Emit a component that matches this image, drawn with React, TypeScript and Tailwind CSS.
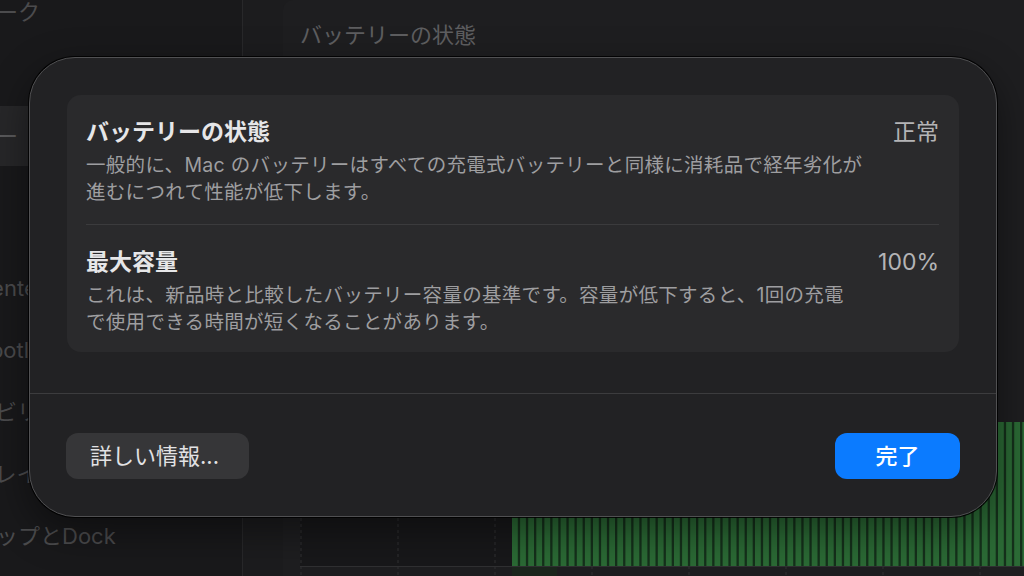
const sidebarItems = [
  { label: "ネットワーク" },
  { label: "VPN" },
  { label: "バッテリー", active: true },
  { label: "一般", groupStart: true },
  { label: "Game Center" },
  { label: "Siri と Spotlight" },
  { label: "アクセシビリティ" },
  { label: "ディスプレイ" },
  { label: "デスクトップとDock" },
];

function UsageChart() {
  const bars = Array.from({ length: 64 }, (_, i) => 212 + i * 8.1);
  const grid = [1, 98, 195, 292, 389, 486, 583, 680];
  return (
    <svg width="724" height="154" viewBox="0 0 724 154" className="block">
      <rect x="0" y="0" width="724" height="144" fill="#18181a" />
      {grid.map((x) => (
        <line key={x} x1={x} y1="0" x2={x} y2="154" stroke="#313133" strokeDasharray="3 3" />
      ))}
      <rect x="212" y="0" width="512" height="144" fill="#15301b" />
      {bars.map((x) => (
        <rect key={x} x={x} y="0" width="5.8" height="144" fill="#2b6a35" />
      ))}
      <line x1="0" y1="144.5" x2="724" y2="144.5" stroke="#303032" />
      <rect x="212" y="145" width="45" height="9" fill="#1b261d" />
    </svg>
  );
}

function InfoRow({ title, value, lines }: { title: string; value: string; lines: string[] }) {
  return (
    <div className="flex justify-between gap-6">
      <div>
        <div className="text-[23px] leading-[28px] font-semibold text-[#e6e6e8]">{title}</div>
        <div className="mt-[6px] text-[19.5px] leading-[26.5px] tracking-[0.3px] text-[#9e9ea0]">
          {lines.map((l) => (
            <div key={l} className="whitespace-nowrap">{l}</div>
          ))}
        </div>
      </div>
      <div className="text-[23px] leading-[28px] text-[#b4b4b6] whitespace-nowrap">{value}</div>
    </div>
  );
}

export default function App() {
  return (
    <div className="relative w-[1024px] h-[576px] overflow-hidden flex bg-[#1c1c1e] font-['Inter','Noto_Sans_CJK_JP',sans-serif]">
      {/* sidebar */}
      <aside className="w-[243px] shrink-0 bg-[#19191b] border-r border-[#28282a] overflow-hidden">
        <ul className="-mt-[18px] -ml-[104px] w-[330px] flex flex-col gap-[2px]">
          {sidebarItems.map((item) => (
            <li
              key={item.label}
              className={
                "h-[60px] flex items-center pl-[12px] rounded-[10px] text-[22px] text-[#4b4b4d] whitespace-nowrap " +
                (item.active ? "bg-[#272729] text-[#5a5a5c] " : "") +
                (item.groupStart ? "mt-[28px]" : "")
              }
            >
              {item.label}
            </li>
          ))}
        </ul>
      </aside>

      {/* main pane */}
      <main className="flex-1 pl-[40px] overflow-hidden">
        <div className="w-[780px] h-full bg-[#1e1e20] rounded-tl-[10px] pt-[20px] px-[17px]">
          <h1 className="text-[22px] leading-[30px] text-[#5e5e60]">バッテリーの状態</h1>
          <div className="mt-[372px]">
            <UsageChart />
          </div>
        </div>
      </main>

      {/* battery health sheet */}
      <div className="absolute left-[29px] top-[57px] w-[968px] h-[460px] rounded-[46px] bg-[#222224] border border-[#505052] shadow-[0_0_0_1px_rgba(0,0,0,0.85),0_14px_40px_rgba(0,0,0,0.45)] flex flex-col">
        <div className="px-[37px] pt-[37px] pb-[41px]">
          <div className="h-[257px] rounded-[14px] bg-[#2a2a2c] pl-[19px] pr-[20px] pt-[23px] pb-[17px]">
            <div className="pb-[19px]">
              <InfoRow
                title="バッテリーの状態"
                value="正常"
                lines={[
                  "一般的に、Mac のバッテリーはすべての充電式バッテリーと同様に消耗品で経年劣化が",
                  "進むにつれて性能が低下します。",
                ]}
              />
            </div>
            <div className="h-px bg-[#3b3b3d]" />
            <div className="pt-[23px]">
              <InfoRow
                title="最大容量"
                value="100%"
                lines={[
                  "これは、新品時と比較したバッテリー容量の基準です。容量が低下すると、1回の充電",
                  "で使用できる時間が短くなることがあります。",
                ]}
              />
            </div>
          </div>
        </div>
        <div className="h-px bg-[#3c3c3e]" />
        <div className="flex justify-between items-center px-[36px] pt-[39px]">
          <button className="w-[183px] h-[46px] rounded-[12px] bg-[#363638] text-[22px] text-[#e2e2e4] text-left pl-[24px]">
            詳しい情報...
          </button>
          <button className="w-[125px] h-[46px] rounded-[12px] bg-[#0b7bff] text-[22px] font-medium text-white">
            完了
          </button>
        </div>
      </div>
    </div>
  );
}
